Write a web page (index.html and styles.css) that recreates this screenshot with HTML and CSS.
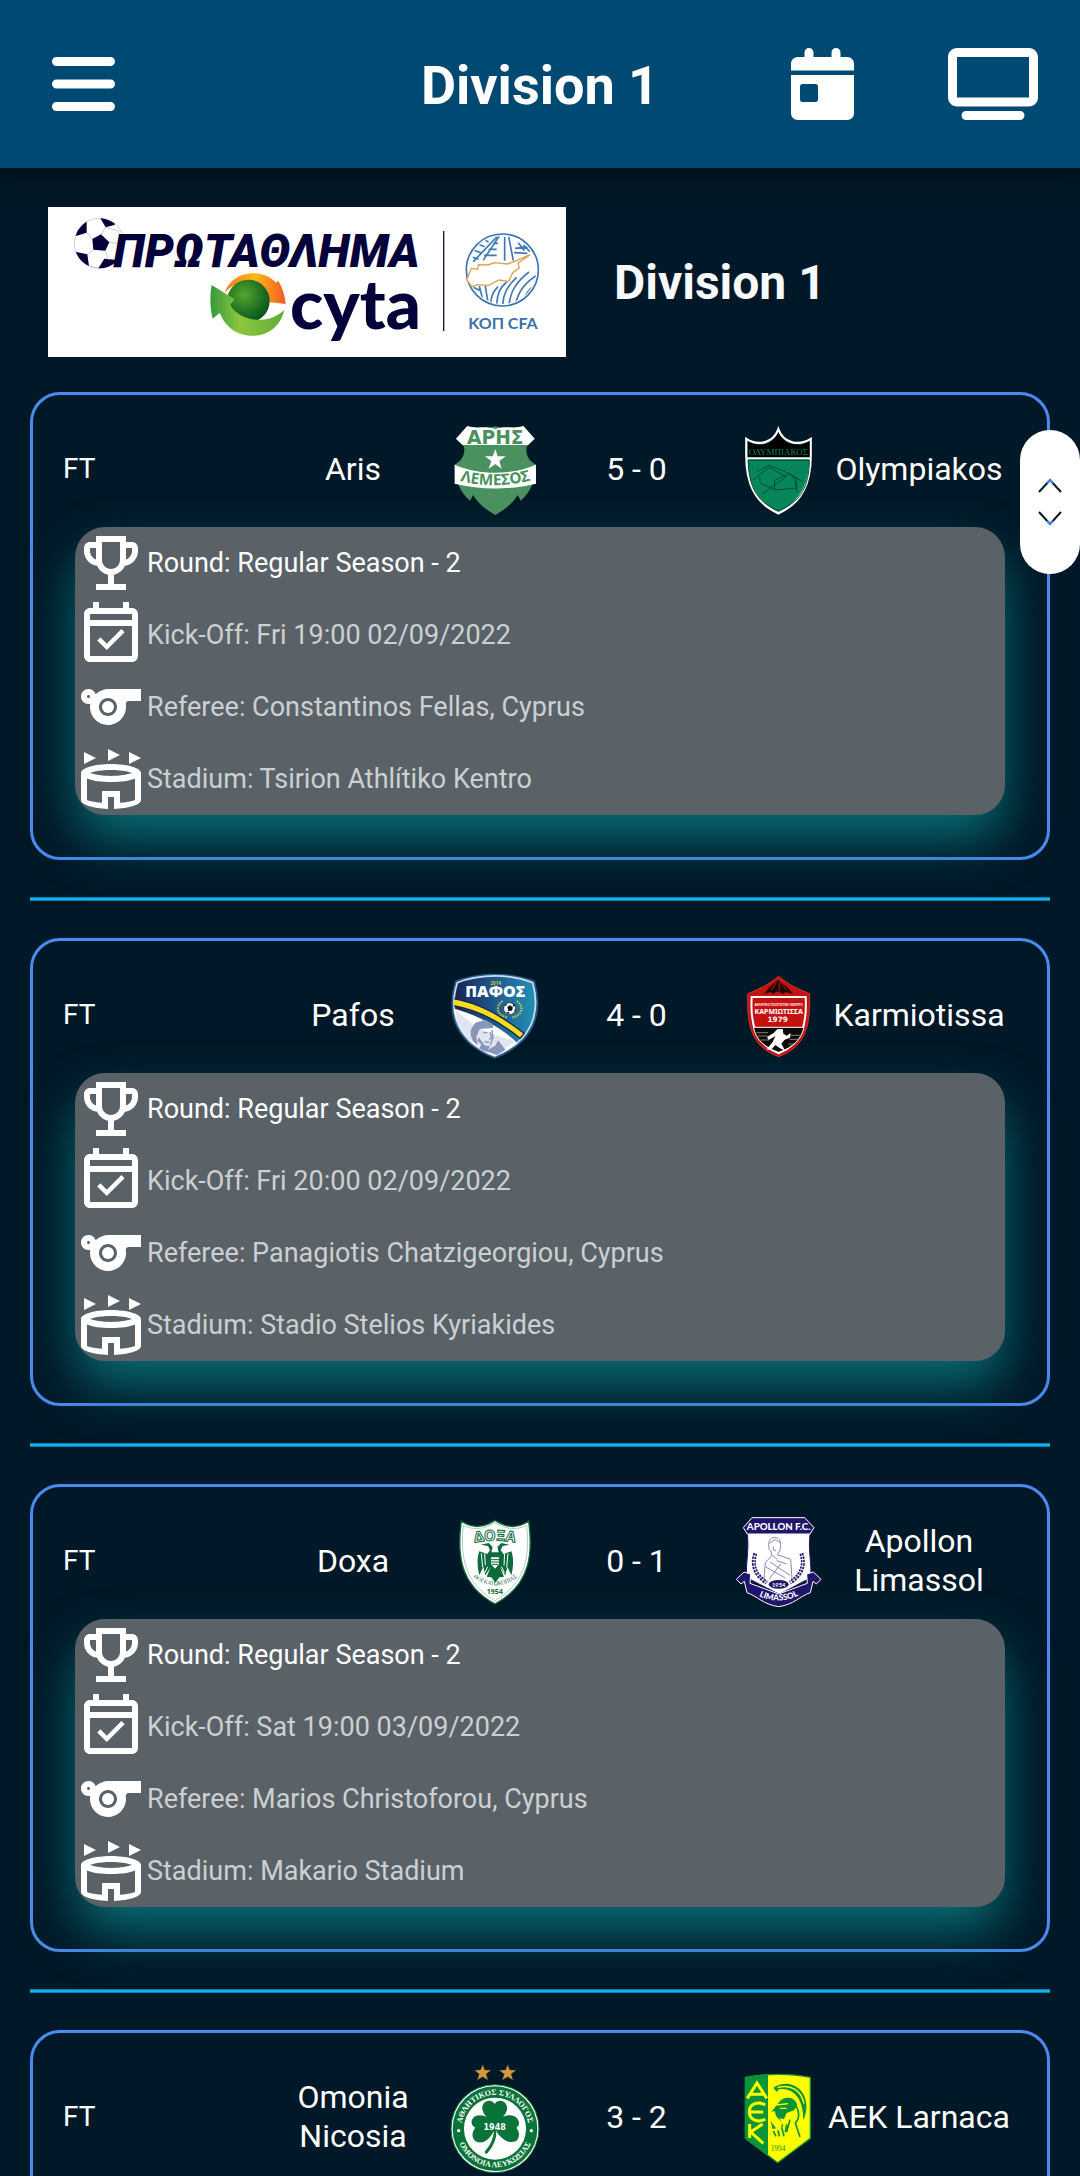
FILE: index.html
```html
<!DOCTYPE html>
<html lang="en">
<head>
<meta charset="utf-8">
<meta name="viewport" content="width=device-width, initial-scale=1">
<title>Division 1</title>
<link rel="stylesheet" href="styles.css">
</head>
<body>
<svg class="sprite" aria-hidden="true">
  <symbol id="trophy" viewBox="0 0 24 24"><path d="M19 5h-2V3H7v2H5C3.900 5 3 5.900 3 7v1c0 2.550 1.920 4.630 4.390 4.940.63 1.500 1.980 2.630 3.610 2.960V19H7v2h10v-2h-4v-3.100c1.630-.33 2.980-1.460 3.610-2.960C19.080 12.630 21 10.550 21 8V7c0-1.100-.9-2-2-2zM5 8V7h2v3.820C5.840 10.400 5 9.300 5 8zm7 6c-1.650 0-3-1.350-3-3V5h6v6c0 1.650-1.350 3-3 3zm7-6c0 1.300-.84 2.400-2 2.820V7h2v1z"/></symbol>
  <symbol id="calendar" viewBox="0 0 24 24"><path d="M16.530 11.060 15.470 10l-4.880 4.880-2.120-2.120-1.060 1.060L10.590 17l5.940-5.940zM19 3h-1V1h-2v2H8V1H6v2H5c-1.110 0-1.990.9-1.990 2L3 19c0 1.100.89 2 2 2h14c1.100 0 2-.9 2-2V5c0-1.100-.9-2-2-2zm0 16H5V9h14v10zM5 7V5h14v2H5z"/></symbol>
  <symbol id="whistle" viewBox="0 0 24 24"><path d="M11.230 6c-1.660 0-3.220.66-4.360 1.730C6.540 6.730 5.610 6 4.500 6 3.120 6 2 7.120 2 8.500S3.120 11 4.500 11c.21 0 .41-.03.61-.08-.05.25-.09.51-.1.78-.18 3.680 2.950 6.680 6.680 6.270 2.550-.28 4.680-2.260 5.190-4.770.15-.71.15-1.400.06-2.060-.09-.6.38-1.130.99-1.130H22V6H11.230zM4.500 9c-.28 0-.5-.22-.5-.5S4.220 8 4.500 8s.5.22.5.5-.22.5-.5.5zM11 15c-1.660 0-3-1.340-3-3s1.340-3 3-3 3 1.340 3 3-1.340 3-3 3z"/><circle cx="11" cy="12" r="2"/></symbol>
  <symbol id="stadium" viewBox="0 0 24 24"><path d="M7 5 3 7V3l4 2zM18 3v4l4-2-4-2zM11 2v4l4-2-4-2z"/><path fill-rule="evenodd" d="M11 21.980C5.900 21.790 2 20.530 2 19v-9c0-1.660 4.480-3 10-3s10 1.340 10 3v9c0 1.530-3.900 2.790-9 2.980V18h-2v3.980zM5 10.040C6.380 10.530 8.770 11 12 11s5.620-.47 7-.96C19 9.860 16.220 9 12 9s-7 .86-7 1.040zM20 11.800c-1.800.75-4.700 1.200-8 1.200s-6.200-.45-8-1.200V19c.6.3 2.200.7 5 .9V16h6v3.900c2.800-.2 4.400-.6 5-.9v-7.200z"/></symbol>
</svg>

<header class="topbar">
  <button class="icon-button menu-button" type="button" aria-label="Menu">
    <svg viewBox="0 0 448 512" width="63" height="72"><path d="M0 96c0-17.700 14.300-32 32-32h384c17.700 0 32 14.300 32 32s-14.300 32-32 32H32C14.300 128 0 113.700 0 96zm0 160c0-17.700 14.300-32 32-32h384c17.700 0 32 14.300 32 32s-14.300 32-32 32H32c-17.700 0-32-14.300-32-32zm448 160c0 17.700-14.300 32-32 32H32c-17.700 0-32-14.300-32-32s14.300-32 32-32h384c17.700 0 32 14.300 32 32z"/></svg>
  </button>
  <h1 class="topbar-title">Division 1</h1>
  <nav class="topbar-actions">
    <button class="icon-button" type="button" aria-label="Calendar">
      <svg viewBox="0 0 448 512" width="63" height="72"><path d="M128 0c17.700 0 32 14.300 32 32v32h128V32c0-17.700 14.300-32 32-32s32 14.300 32 32v32h48c26.500 0 48 21.500 48 48v48H0v-48c0-26.500 21.500-48 48-48h48V32c0-17.700 14.300-32 32-32zM0 192h448v272c0 26.500-21.500 48-48 48H48c-26.500 0-48-21.500-48-48V192zm80 64c-8.800 0-16 7.200-16 16v96c0 8.800 7.200 16 16 16h96c8.800 0 16-7.200 16-16v-96c0-8.800-7.200-16-16-16H80z"/></svg>
    </button>
    <button class="icon-button" type="button" aria-label="TV">
      <svg viewBox="0 0 640 512" width="90" height="72"><path d="M64 64v288h512V64H64zM0 64C0 28.700 28.700 0 64 0h512c35.300 0 64 28.700 64 64v288c0 35.300-28.700 64-64 64H64c-35.300 0-64-28.700-64-64V64zm128 384h384c17.700 0 32 14.300 32 32s-14.300 32-32 32H128c-17.700 0-32-14.300-32-32s14.300-32 32-32z"/></svg>
    </button>
  </nav>
</header>

<main class="content">
  <section class="league">
    <svg class="league-logo" viewBox="-36 21 1554 450" role="img" aria-label="Championship logo">
      <defs>
        <radialGradient id="sphere" cx="40%" cy="35%" r="65%"><stop offset="0" stop-color="#55a52d"/><stop offset="1" stop-color="#06561d"/></radialGradient>
        <linearGradient id="orange"><stop offset="0" stop-color="#f07c1c"/><stop offset=".5" stop-color="#fdb913"/><stop offset="1" stop-color="#f15a24"/></linearGradient>
        <linearGradient id="leaf"><stop offset="0" stop-color="#379b3c"/><stop offset=".4" stop-color="#8cc63f"/><stop offset="1" stop-color="#5fae35"/></linearGradient>
        <clipPath id="ball"><circle cx="118" cy="130" r="75"/></clipPath>
        <clipPath id="seal"><circle cx="1327" cy="210" r="102"/></clipPath>
      </defs>
      <path fill="#fff" d="M-36 21h1554v450H-36z"/>
      <circle cx="118" cy="130" r="75" fill="#fff" stroke="#b5b5c3" stroke-width="2"/>
      <g clip-path="url(#ball)">
        <path fill="#04003a" d="m97 117 26-14 25 24-12 25-36-3zM48 108l5-45 27-5v40zM118 50l50 15-5 10-26 7zM45 155l37 8 5 35-40-10zM133 176l40 4-5 30-55-2z"/>
        <path fill="none" stroke="#aaaab8" stroke-width="2" d="M97 117 80 98M123 103l14-21M148 127l30 3M136 152l10 28M100 149l-18 14M137 82l42 12M87 198l30 8"/>
      </g>
      <text x="160" y="202" class="brand-title">ΠΡΩΤΑΘΛΗΜΑ</text>
      <path fill="url(#orange)" d="M495 278c8-30 40-58 85-58 28 0 50 10 68 28l7-6c12 20 20 45 22 70l-60-7 10-8c-20-60-95-65-132-19z"/>
      <circle cx="565" cy="303" r="64" fill="url(#sphere)"/>
      <path fill="url(#leaf)" d="m455 255 68 42-12 18c30 52 115 60 162 15-15 60-60 80-105 77-50-5-75-35-89-68l-21 17c-8-30-9-70-3-101z"/>
      <text x="690" y="388" class="brand-name">cyta</text>
      <path stroke="#151247" stroke-width="4" d="M1151 93v300"/>
      <circle cx="1327" cy="210" r="108" fill="#fff" stroke="#3a73b4" stroke-width="5"/>
      <g clip-path="url(#seal)" fill="none" stroke="#4178b5" stroke-width="5">
        <path d="m1240 185 72-76M1320 105l-50 75M1334 110v72M1346 110l14 72M1314 130h-14M1310 148h-24M1310 166h-38M1240 150l22 8M1252 132l22 8M1268 118l18 8M1238 172l18 6M1375 128l18 24M1390 135l20 20M1365 145l50-5M1362 158l40 2M1240 262l22 10M1258 258l10 40M1276 258l8 50M1292 320c0-25 4-42 22-60M1310 322c0-40 10-60 30-76M1328 322c0-40 15-65 42-90M1347 322c2-45 20-75 60-106M1366 320c5-40 25-70 65-94M1386 315c5-30 20-50 50-68"/>
      </g>
      <path fill="#fff" stroke="#d9a446" stroke-width="4" d="m1234 205 18 3 4-14 28 1 20-7 38 4 28-10 40-18-36 26 4 14-20 14-12 26-30-4-30 16-34-2-16 6-16-20z"/>
      <text x="1225" y="387" class="brand-org">ΚΟΠ CFA</text>
    </svg>
    <h2 class="league-name">Division 1</h2>
  </section>

  <article class="match">
    <div class="match-head">
      <span class="status">FT</span>
      <span class="team">Aris</span>
      <svg class="crest" viewBox="90 75 270 270" role="img" aria-label="Aris crest">
        <path fill="#4b915f" d="m142 78-34 38 24 24c4 22-5 42-28 54 0 42 13 78 46 108l9-17c15 25 35 41 67 60 32-19 52-35 67-60l9 17c33-30 46-66 46-108-23-12-32-32-28-54l24-24-34-38c-28 10-50 10-84 1-34 9-56 9-84-1z"/>
        <path fill="#fff" d="m142 78-34 38 20 19h196l20-19-34-38c-28 10-60-3-84 10-24-13-56 0-84-10zM226 147l7 22h24l-19 14 7 23-19-14-20 14 8-23-19-14h23zM104 194c75 32 170 32 244 0v57c-78 19-166 19-244 0z"/>
        <text x="226" y="131" class="aris-name">ΑΡΗΣ</text>
        <path id="aris-arc" fill="none" d="M112 241q114 30 228-2"/>
        <text class="aris-city"><textPath href="#aris-arc" startOffset="50%">ΛΕΜΕΣΟΣ</textPath></text>
      </svg>
      <span class="score">5 - 0</span>
      <svg class="crest" viewBox="939 75 270 270" role="img" aria-label="Olympiakos crest">
        <path fill="#078759" stroke="#fff" stroke-width="7" d="M1075 88c-14 40-60 52-96 29v50c0 80 24 140 96 173 72-33 97-93 97-173v-50c-37 23-83 11-97-29z"/>
        <path d="M1075 96c-15 34-54 50-92 27v51h186v-51c-38 23-79 7-94-27z"/>
        <path stroke="#fff" stroke-width="6" d="M979 175h193"/>
        <path fill="none" stroke="#064c36" stroke-width="3" d="M985 181h183c-1 74-22 124-93 151-68-27-89-77-90-151zM1010 214l37-18 64 26 38 24M999 240l48-38 52 28-70 50M1020 230v18l44 22 66-6v-28l-24-14-42 18v30M1120 225l12 50"/>
        <text x="1075" y="166" class="oly-name">ΟΛΥΜΠΙΑΚΟΣ</text>
      </svg>
      <span class="team">Olympiakos</span>
    </div>
    <ul class="details">
      <li class="detail detail-lead"><svg class="detail-icon"><use href="#trophy"/></svg>Round: Regular Season - 2</li>
      <li class="detail"><svg class="detail-icon"><use href="#calendar"/></svg>Kick-Off: Fri 19:00 02/09/2022</li>
      <li class="detail"><svg class="detail-icon"><use href="#whistle"/></svg>Referee: Constantinos Fellas, Cyprus</li>
      <li class="detail"><svg class="detail-icon"><use href="#stadium"/></svg>Stadium: Tsirion Athlítiko Kentro</li>
    </ul>
  </article>
  <hr class="divider">

  <article class="match">
    <div class="match-head">
      <span class="status">FT</span>
      <span class="team">Pafos</span>
      <svg class="crest" viewBox="90 63 270 270" role="img" aria-label="Pafos crest">
        <defs>
          <linearGradient id="pafos-sky"><stop offset="0" stop-color="#182357"/><stop offset=".6" stop-color="#1f6496"/><stop offset="1" stop-color="#2290b5"/></linearGradient>
          <clipPath id="pafos-shield"><path d="M112 98c70-27 158-27 226 0 25 90-2 176-114 220-112-44-140-130-112-220z"/></clipPath>
        </defs>
        <path fill="#2c5e8d" d="M106 92c74-28 164-28 238 0 30 100-2 189-120 234-118-45-150-134-118-234z"/>
        <path fill="url(#pafos-sky)" stroke="#c9def0" stroke-width="5" d="M112 98c70-27 158-27 226 0 25 90-2 176-114 220-112-44-140-130-112-220z"/>
        <g clip-path="url(#pafos-shield)">
          <path fill="#fff" d="M100 175c76 24 134 50 192 104l-68 60-130-70z"/>
          <path fill="#dfe6ef" d="M106 178c50 50 90 70 180 95l-60 45-110-70z"/>
          <path fill="#f6dc1e" stroke="#14264d" stroke-width="4" d="M100 146c80 14 142 50 212 104l-12 15c-60-50-120-84-200-98z"/>
          <path fill="#8795b8" d="m152 240 14-22 30-9 22 13 1 12-40 3-10 24 4 26-14-14-6-14zM176 262l18 24 16 3-6 10 22-12 8-16 22 28-24 16-30-10-28-4 10-18-12-10z"/>
          <path fill="none" stroke="#8795b8" stroke-width="4" d="M190 248h12M210 246l5 18-8 4M194 276h14M216 240l3 22-8 24"/>
        </g>
        <circle cx="269" cy="176" r="18" fill="#fff" stroke="#101c3b" stroke-width="2"/>
        <path fill="#101010" d="m262 170 9-4 8 7-4 9-10 1zM252 168l6-6 4 4zM280 160l5 8-7 2zM258 188l8-3 3 8zM282 182l4-6 1 6z"/>
        <path fill="none" stroke="#cdc636" stroke-width="6" stroke-dasharray="5 3" d="M248 153c-22 14-20 42 14 50M290 153c22 14 20 42-14 50"/>
        <text x="227" y="104" class="pafos-year">2014</text>
        <text x="226" y="140" class="pafos-name">ΠΑΦΟΣ</text>
      </svg>
      <span class="score">4 - 0</span>
      <svg class="crest" viewBox="939 63 270 270" role="img" aria-label="Karmiotissa crest">
        <path fill="#c5120f" stroke="#e2483f" stroke-width="2" d="M1076 79c-28 24-58 38-93 52-2 90 7 158 93 189 86-31 95-99 93-189-35-14-65-28-93-52z"/>
        <path fill="#1b0908" d="m1074 90-24 20-18 22 20-6 6 6 16-8 16 8 6-6 24 6-20-22z"/>
        <path fill="none" stroke="#c5120f" stroke-width="3" d="m1070 96-16 24M1078 96v26M1084 98l14 22"/>
        <path fill="#c5120f" stroke="#fff" stroke-width="6" d="M995 141h162c4 80-8 138-81 169-73-31-85-89-81-169z"/>
        <path fill="#0a0a0a" stroke="#fff" stroke-width="3" d="M1000 232h152c-8 36-32 60-76 75-44-15-68-39-76-75z"/>
        <path fill="#fff" d="m1072 238 16-1 2 14 10 6 12-8-2 14-16 6-10 12 12 22-16-8-14-10-14 16-12-3 18-22 8-18-20 12-5-9 20-12z"/>
        <path stroke="#bbb" stroke-width="2" d="M1010 248h34M1014 258h28M1022 270h26M1112 256h30M1108 268h26M1106 282h20"/>
        <text x="1076" y="169" class="karm-small">ΑΘΛΗΤΙΚΟ ΠΟΛΙΤΙΣΤΙΚΟ ΚΕΝΤΡΟ</text>
        <text x="1076" y="192" class="karm-name">ΚΑΡΜΙΩΤΙΣΣΑ</text>
        <text x="1073" y="215" class="karm-year">1979</text>
      </svg>
      <span class="team">Karmiotissa</span>
    </div>
    <ul class="details">
      <li class="detail detail-lead"><svg class="detail-icon"><use href="#trophy"/></svg>Round: Regular Season - 2</li>
      <li class="detail"><svg class="detail-icon"><use href="#calendar"/></svg>Kick-Off: Fri 20:00 02/09/2022</li>
      <li class="detail"><svg class="detail-icon"><use href="#whistle"/></svg>Referee: Panagiotis Chatzigeorgiou, Cyprus</li>
      <li class="detail"><svg class="detail-icon"><use href="#stadium"/></svg>Stadium: Stadio Stelios Kyriakides</li>
    </ul>
  </article>
  <hr class="divider">

  <article class="match">
    <div class="match-head">
      <span class="status">FT</span>
      <span class="team">Doxa</span>
      <svg class="crest" viewBox="90 51 270 270" role="img" aria-label="Doxa crest">
        <path fill="#fff" stroke="#0b6b3c" stroke-width="4" d="M124 63c28 20 64 23 101-2 37 25 73 22 101 2 12 90 10 190-101 249C114 253 112 153 124 63z"/>
        <path fill="none" stroke="#8ab59c" stroke-width="2" d="M130 76c28 14 60 14 95-8 35 22 67 22 95 8 8 82 4 170-95 226-99-56-103-144-95-226z"/>
        <path id="doxa-arc-top" fill="none" d="M164 128q61-12 122 0"/>
        <text class="doxa-name"><textPath href="#doxa-arc-top" startOffset="50%">ΔΟΞΑ</textPath></text>
        <g fill="#0b6b3c">
          <path d="m182 134 24-5 12 12-4 16h22l-4-16 12-12 24 5-20 4-6 12 8 12 24-8c8 22 6 46 0 72l-12-26-6 26-16-24 12 28-14 2-6 8-6 8-6-8-6-8-14-2 12-28-16 24-6-26-12 26c-6-26-8-50 0-72l24 8 8-12-6-12z"/>
        </g>
        <path fill="#fff" d="M213 172h24v20l-12 14-12-14z"/>
        <path fill="none" stroke="#0b6b3c" stroke-width="3" d="M213 179h24M213 186h24M216 193h18"/>
        <path fill="none" stroke="#fff" stroke-width="3" d="m184 160 4 42M194 160l2 36M264 160l-4 42M254 160l-2 36M203 200l-8 18M245 200l8 18"/>
        <path id="doxa-arc" fill="none" d="M158 230q67 52 136 0"/>
        <text class="doxa-city"><textPath href="#doxa-arc" startOffset="50%">ΘΟΪ ΚΑΤΩΚΟΠΙΑΣ</textPath></text>
        <text x="224" y="282" class="doxa-year">1954</text>
      </svg>
      <span class="score">0 - 1</span>
      <svg class="crest" viewBox="939 51 270 270" role="img" aria-label="Apollon Limassol crest">
        <path fill="#fff" stroke="#20146b" stroke-width="3" d="M996 53h158l28 30-12 20c-6 48 6 92 2 130l-94 50-98-50c-4-38 8-82 2-130l-12-20z"/>
        <path fill="#20146b" stroke="#fff" stroke-width="3" d="M996 53h158l28 30-12 19H982l-12-19z"/>
        <path fill="#20146b" stroke="#fff" stroke-width="3" d="m972 216-23 22 14 14 10-8 8 34c30 10 50 36 95 42 45-6 65-32 95-42l8-34 10 8 14-14-23-22-20 6 2 28-86 32-86-32 2-28z"/>
        <path fill="none" stroke="#8f88b5" stroke-width="3" d="M1048 150c-5-24 0-36 16-38 18 0 20 18 16 38l-8 14 40 14 4 60M1052 150l4 16-20 22-4 48M1048 130l18-12 14 10M1060 140v10l8 2M1056 166l16 12M1050 186l60 40M1036 200l60 34M1048 236l34-44M1070 182l30 10"/>
        <path fill="none" stroke="#20146b" stroke-width="12" stroke-dasharray="7 3" d="M1006 160c-12 36 0 66 34 88M1144 160c12 36 0 66-34 88"/>
        <path fill="none" stroke="#fff" stroke-width="2" d="M1006 160c-12 36 0 66 34 88M1144 160c12 36 0 66-34 88"/>
        <ellipse cx="1076" cy="253" rx="30" ry="13" fill="#20146b"/>
        <text x="1076" y="90" class="apollon-name">APOLLON F.C.</text>
        <text x="1076" y="260" class="apollon-year">1954</text>
        <path id="apollon-arc" fill="none" d="M1012 286q64 32 128-2"/>
        <text class="apollon-city"><textPath href="#apollon-arc" startOffset="50%">LIMASSOL</textPath></text>
      </svg>
      <span class="team">Apollon Limassol</span>
    </div>
    <ul class="details">
      <li class="detail detail-lead"><svg class="detail-icon"><use href="#trophy"/></svg>Round: Regular Season - 2</li>
      <li class="detail"><svg class="detail-icon"><use href="#calendar"/></svg>Kick-Off: Sat 19:00 03/09/2022</li>
      <li class="detail"><svg class="detail-icon"><use href="#whistle"/></svg>Referee: Marios Christoforou, Cyprus</li>
      <li class="detail"><svg class="detail-icon"><use href="#stadium"/></svg>Stadium: Makario Stadium</li>
    </ul>
  </article>
  <hr class="divider">

  <article class="match">
    <div class="match-head">
      <span class="status">FT</span>
      <span class="team">Omonia Nicosia</span>
      <svg class="crest crest-tall" viewBox="90 66 270 330" role="img" aria-label="Omonia Nicosia crest">
        <g fill="#d19b3c" stroke="#7a5520" stroke-width="1">
          <path d="m188 71 6 16 19 1-15 11 6 18-16-10-16 10 6-18-14-11 18-1z"/>
          <path d="m263 71 6 16 19 1-15 11 6 18-16-10-16 10 6-18-15-11 19-1z"/>
        </g>
        <circle cx="225" cy="263" r="132" fill="#fff" stroke="#0a7339" stroke-width="3"/>
        <circle cx="225" cy="263" r="109" fill="none" stroke="#0a7339" stroke-width="36"/>
        <circle cx="225" cy="263" r="93" fill="#fff"/>
        <path fill="#0a7339" d="M222 246c-22-14-38-32-35-49 4-20 28-24 37-8 9-16 33-12 37 8 3 17-13 35-32 49 14-24 50-30 62-14 9 12 8 20-2 28 12 14 10 34-2 41-22 9-46-10-59-32 4 24-10 50-26 68-6 4-10-4-6-8 16-18 24-38 26-60-12 24-30 40-50 34-16-6-20-26-6-43-14-8-14-20-6-30 14-14 46-6 62 16z"/>
        <text x="224" y="266" class="omonia-year">1948</text>
        <path id="omonia-top" fill="none" d="M124 263a101 101 0 0 1 202 0"/>
        <path id="omonia-bottom" fill="none" d="M109 263a116 116 0 0 0 232 0"/>
        <text class="omonia-ring"><textPath href="#omonia-top" startOffset="50%">ΑΘΛΗΤΙΚΟΣ ΣΥΛΛΟΓΟΣ</textPath></text>
        <text class="omonia-ring"><textPath href="#omonia-bottom" startOffset="50%">ΟΜΟΝΟΙΑ ΛΕΥΚΩΣΙΑΣ</textPath></text>
        <circle cx="116" cy="269" r="5" fill="#fff"/><circle cx="334" cy="269" r="5" fill="#fff"/>
      </svg>
      <span class="score">3 - 2</span>
      <svg class="crest" viewBox="939 96 270 270" role="img" aria-label="AEK Larnaca crest">
        <path fill="#ff0" d="M976 109c60-12 136-12 195 0v183l-98 73-97-73z"/>
        <path fill="#0b9438" d="M976 109q33-7 68-8v243l-68-52z"/>
        <path fill="none" stroke="#0b9438" stroke-width="4" d="M976 109c60-12 136-12 195 0v183l-98 73-97-73z"/>
        <g fill="none" stroke="#ff0" stroke-width="9">
          <path d="m982 172 29-46 29 46M993 160h36M1036 192c-20-12-48-6-48 20s28 34 48 22M990 213h40M989 249v42M1028 249l-36 24 38 34"/>
        </g>
        <path fill="#0b9438" d="m1054 212 28-34c18-14 46-8 50 16l-10 14-22 8-8 18-14-2 12 22-8 14 4-22-18-22-4-14zM1052 240l16 22-10 2zM1060 140c40-26 90-6 98 42 4 24-2 40-8 56 0-60-24-98-72-94l-8 8 10 14z"/>
        <path fill="none" stroke="#ff0" stroke-width="4" d="M1072 140c40-12 72 8 80 48M1070 192l34-4M1080 202h20"/>
        <path fill="none" stroke="#0b9438" stroke-width="5" d="M1106 180c34 10 36 50 20 66l14 42M1110 236l-10 36M1086 262l6 24M1074 268l4 18M1060 270l8 16M1100 250l-4 24"/>
        <text x="1074" y="331" class="aek-year">1994</text>
      </svg>
      <span class="team">AEK Larnaca</span>
    </div>
  </article>
</main>

<button class="scroll-handle" type="button" aria-label="Scroll">
  <svg viewBox="0 0 24 48" width="24" height="48">
    <path d="m1 14 11-12 11 12M1 34l11 12 11-12"/>
    <path class="handle-tip" d="m9 5 3-3 3 3M9 43l3 3 3-3"/>
  </svg>
</button>
</body>
</html>
```
FILE: styles.css
```css
* {
  box-sizing: border-box;
}

body {
  display: flex;
  flex-direction: column;
  height: 100vh;
  margin: 0;
  overflow: hidden;
  background: #001827;
  color: #fff;
  font-family: Roboto, sans-serif;
}

.sprite {
  position: absolute;
  width: 0;
  height: 0;
}

/* Top bar */
.topbar {
  display: grid;
  grid-template-columns: 1fr auto 1fr;
  flex: none;
  align-items: center;
  height: 168px;
  padding: 0 42px;
  background: #004972;
  box-shadow: 0 8px 20px rgba(0, 0, 0, 0.4);
  z-index: 1;
}

.topbar-title {
  margin: 0;
  padding-top: 3px;
  font-size: 54px;
  line-height: 64px;
  font-weight: 700;
}

.topbar-actions {
  display: flex;
  justify-content: flex-end;
  gap: 94px;
}

.icon-button {
  padding: 0;
  border: 0;
  background: none;
  cursor: pointer;
}

.icon-button svg {
  display: block;
  fill: #fff;
}

.menu-button {
  justify-self: start;
  padding: 0 10px;
}

/* Page body */
.content {
  flex: 1;
  min-height: 0;
  padding: 39px 30px 0;
  overflow-y: auto;
  scrollbar-width: none;
}

.league {
  display: flex;
  align-items: center;
  gap: 48px;
  margin-bottom: 35px;
  padding: 0 18px;
}

.league-logo {
  display: block;
  width: 518px;
  height: 150px;
}

.league-name {
  margin: 0;
  padding-top: 2px;
  color: #f8f9fb;
  font-size: 48px;
  line-height: 56px;
  font-weight: 700;
}

/* Match cards */
.match {
  min-height: 468px;
  padding-bottom: 42px;
  border: 3px solid #4a8bef;
  border-radius: 30px;
}

.match-head {
  display: grid;
  grid-template-columns: 193fr 194fr 90px 193fr 90px 192fr;
  align-items: center;
  padding: 30px 32px 12px 30px;
}

.status {
  padding-bottom: 2px;
  font-size: 28px;
  line-height: 36px;
}

.team,
.score {
  padding-bottom: 2px;
  font-size: 32px;
  line-height: 39px;
  text-align: center;
}

.crest {
  display: block;
  width: 90px;
  height: 90px;
}

.crest-tall {
  height: 110px;
}

.details {
  margin: 0 42px;
  padding: 0;
  border-radius: 30px;
  background: #5a6268;
  box-shadow: 0 26px 52px -3px #087078;
  list-style: none;
}

.detail {
  display: flex;
  align-items: center;
  height: 72px;
  color: #ccd0d2;
  font-size: 27px;
  line-height: 36px;
}

.detail-lead {
  color: #fff;
}

.detail-icon {
  width: 72px;
  height: 72px;
  fill: #fff;
}

.divider {
  height: 4px;
  margin: 37px 0;
  border: solid #0a82b0;
  border-width: 1px 0;
  background: #12b2ee;
}

/* Handle floating on the right edge */
.scroll-handle {
  position: absolute;
  top: 430px;
  right: 0;
  z-index: 2;
  display: grid;
  place-items: center;
  width: 60px;
  height: 144px;
  padding: 0;
  border: 0;
  border-radius: 30px;
  background: #fff;
}

.scroll-handle svg {
  fill: none;
  stroke: #001827;
  stroke-width: 2;
}

.handle-tip {
  stroke: #4a8bef;
}

/* Lettering inside the league logo */
.brand-title {
  fill: #04003a;
  font: italic 900 138px Roboto, sans-serif;
}

.brand-name {
  fill: #04003a;
  font: 900 206px Lato, sans-serif;
}

.brand-org {
  fill: #3a6fab;
  font: 700 48px Lato, "Noto Sans", sans-serif;
}

/* Lettering inside the club crests */
.crest text {
  text-anchor: middle;
}

.aris-name {
  fill: #4b915f;
  font: 700 56px "DejaVu Sans", sans-serif;
}

.aris-city {
  fill: #4b915f;
  font: 700 46px "Noto Sans", sans-serif;
}

.oly-name {
  fill: #078759;
  font: 27px "Liberation Serif", serif;
}

.pafos-year {
  fill: #cdc636;
  font: 700 14px "Noto Sans", sans-serif;
}

.pafos-name {
  fill: #fff;
  font: 800 48px "Open Sans", sans-serif;
}

.karm-small {
  fill: #fff;
  font: 700 9px "Liberation Sans", sans-serif;
}

.karm-name {
  fill: #fff;
  font: 700 21px "Noto Sans", sans-serif;
}

.karm-year {
  fill: #fff;
  font: 700 22px "DejaVu Sans", sans-serif;
}

.doxa-name {
  fill: #fff;
  stroke: #0b6b3c;
  stroke-width: 3;
  font: 700 44px "Noto Sans", sans-serif;
}

.doxa-city {
  fill: #0b6b3c;
  font: 17px "Liberation Serif", serif;
}

.doxa-year {
  fill: #0b6b3c;
  font: 700 21px "Noto Sans", sans-serif;
}

.apollon-name {
  fill: #fff;
  font: 900 29px Lato, sans-serif;
}

.apollon-year {
  fill: #fff;
  font: 700 17px Lato, sans-serif;
}

.apollon-city {
  fill: #fff;
  font: 900 25px Lato, sans-serif;
}

.omonia-year {
  fill: #fff;
  font: 700 24px "DejaVu Sans", sans-serif;
}

.omonia-ring {
  fill: #fff;
  font: 700 24px "Liberation Serif", serif;
}

.aek-year {
  fill: #0b9438;
  font: 22px "Liberation Serif", serif;
}
```
